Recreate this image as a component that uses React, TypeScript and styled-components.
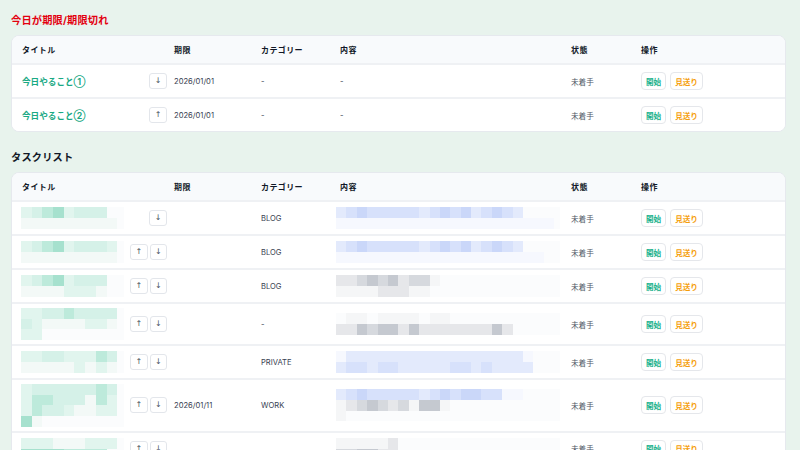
import React from "react";
import styled, { createGlobalStyle } from "styled-components";

const GlobalStyle = createGlobalStyle`
  body {
    margin: 0;
    background: #e8f3ed;
    font-family: Inter, "Noto Sans CJK JP", sans-serif;
    color: #374151;
  }
`;

const Page = styled.div`
  padding: 13px 14px 0 11px;
  display: flex;
  flex-direction: column;
`;

const SectionTitle = styled.h2<{ $color: string }>`
  margin: 0 0 8px;
  font-size: 10.2px;
  line-height: 14px;
  font-weight: 700;
  color: ${(p) => p.$color};
  letter-spacing: 0.2px;
`;

const Card = styled.div`
  background: #fff;
  border: 1px solid #e6e9ee;
  border-radius: 8px;
  overflow: hidden;
  margin-bottom: 18px;
`;

const Row = styled.div<{ $head?: boolean }>`
  display: grid;
  grid-template-columns: 108px 44px 87px 79px 231px 70px 1fr;
  align-items: center;
  padding: ${(p) => (p.$head ? "0" : "4px")} 0 ${(p) => (p.$head ? "0" : "4px")} 10px;
  min-height: ${(p) => (p.$head ? "27px" : "24px")};
  background: ${(p) => (p.$head ? "#f8fafc" : "#fff")};
  border-top: ${(p) => (p.$head ? "none" : "2px solid #eff1f4")};
`;

const HeadCell = styled.div`
  font-size: 8px;
  font-weight: 700;
  color: #111827;
  letter-spacing: 0.4px;
`;

const Cell = styled.div<{ $muted?: boolean }>`
  font-size: 7.6px;
  color: ${(p) => (p.$muted ? "#4b5563" : "#374151")};
`;

const TitleLink = styled.div`
  font-size: 8.6px;
  font-weight: 700;
  color: #1aa984;
`;

const ArrowCell = styled.div`
  display: flex;
  justify-content: flex-end;
  gap: 2px;
  padding-right: 7px;
`;

const ArrowButton = styled.button`
  width: 18px;
  height: 16px;
  padding: 0;
  border: 1px solid #e3e6eb;
  border-radius: 3px;
  background: #fff;
  color: #4b5563;
  font-family: "DejaVu Sans", sans-serif;
  font-size: 8px;
  line-height: 14px;
`;

const Actions = styled.div`
  display: flex;
  gap: 4px;
`;

const ActionButton = styled.button<{ $color: string }>`
  height: 18px;
  padding: 0 4px;
  border: 1px solid #e5e7eb;
  border-radius: 4px;
  background: #fff;
  color: ${(p) => p.$color};
  font-family: "Noto Sans CJK JP", sans-serif;
  font-size: 7.6px;
  font-weight: 700;
`;

const MosaicBox = styled.div<{ $shift: number; $w: number }>`
  margin-left: ${(p) => p.$shift}px;
  width: ${(p) => p.$w}px;
  background: #fbfcfd;
  display: flex;
  flex-direction: column;
`;

const MosaicLine = styled.div`
  display: flex;
  height: 10.7px;
`;

const Tile = styled.span<{ $c: string; $cw: number }>`
  width: ${(p) => p.$cw}px;
  flex: none;
  background: ${(p) => p.$c};
`;

const palettes: Record<string, Record<string, string>> = {
  g: { ".": "transparent", "0": "#f3f9f7", "1": "#e1f5ee", "2": "#d5f1e8", "3": "#bdeadb", "4": "#a6e1ce" },
  b: { ".": "transparent", "0": "#f6f8fe", "1": "#e3eafc", "2": "#d7e1fb", "3": "#cad7f9" },
  k: { ".": "transparent", "0": "#f5f6f7", "1": "#e6e7ea", "2": "#d6d9de", "3": "#c5c9d0" },
};

// each line: palette letter + tiles
function Mosaic({ lines, shift = 0, width, cw = 10.7 }: { lines: string[]; shift?: number; width: number; cw?: number }) {
  return (
    <MosaicBox $shift={shift} $w={width}>
      {lines.map((line, i) => {
        const pal = palettes[line[0]];
        return (
          <MosaicLine key={i}>
            {line
              .slice(1)
              .split("")
              .map((ch, j) => (
                <Tile key={j} $c={pal[ch]} $cw={cw} />
              ))}
          </MosaicLine>
        );
      })}
    </MosaicBox>
  );
}

const Arrows = ({ up, down }: { up?: boolean; down?: boolean }) => (
  <ArrowCell>
    {up && <ArrowButton>↑</ArrowButton>}
    {down && <ArrowButton>↓</ArrowButton>}
  </ArrowCell>
);

const RowActions = () => (
  <Actions>
    <ActionButton $color="#14b08a">開始</ActionButton>
    <ActionButton $color="#f59e0b">見送り</ActionButton>
  </Actions>
);

const Header = () => (
  <Row $head>
    <HeadCell>タイトル</HeadCell>
    <div />
    <HeadCell>期限</HeadCell>
    <HeadCell>カテゴリー</HeadCell>
    <HeadCell>内容</HeadCell>
    <HeadCell>状態</HeadCell>
    <HeadCell>操作</HeadCell>
  </Row>
);

const todayTasks = [
  { title: "今日やること①", up: false, down: true },
  { title: "今日やること②", up: true, down: false },
];

const tasks = [
  {
    title: ["g12341222", "g000000000"],
    up: false,
    down: true,
    due: "",
    cat: "BLOG",
    body: ["b123222221232312321", "b000000000000000000000"],
  },
  {
    title: ["g123412221", "g000000000"],
    up: true,
    down: true,
    due: "",
    cat: "BLOG",
    body: ["b123222221232312321", "b00000000000000000000"],
  },
  {
    title: ["g12341222", "g00001110"],
    up: true,
    down: true,
    due: "",
    cat: "BLOG",
    body: ["k1123231220", "k000011100"],
  },
  {
    title: ["g112232222", "g210000110", "g11"],
    up: true,
    down: true,
    due: "",
    cat: "-",
    body: ["k.00.0000.00", "k11323313111111131"],
  },
  {
    title: ["g112211132", "g000001010"],
    up: true,
    down: true,
    due: "",
    cat: "PRIVATE",
    body: ["b0111111111111111110", "b1221221111122121111"],
  },
  {
    title: ["g122222232", "g133222031", "g132210011", "g40"],
    up: true,
    down: true,
    due: "2026/01/11",
    cat: "WORK",
    body: ["b123222221232332200", "k01232120330", "k0"],
  },
  {
    title: ["g111000111", "g44443333"],
    up: true,
    down: true,
    due: "",
    cat: "",
    body: ["k000001", "k223311"],
  },
];

export default function App() {
  return (
    <>
      <GlobalStyle />
      <Page>
        <SectionTitle $color="#e3000f">今日が期限/期限切れ</SectionTitle>
        <Card>
          <Header />
          {todayTasks.map((t) => (
            <Row key={t.title}>
              <TitleLink>{t.title}</TitleLink>
              <Arrows up={t.up} down={t.down} />
              <Cell>2026/01/01</Cell>
              <Cell>-</Cell>
              <Cell>-</Cell>
              <Cell $muted>未着手</Cell>
              <RowActions />
            </Row>
          ))}
        </Card>

        <SectionTitle $color="#111827">タスクリスト</SectionTitle>
        <Card>
          <Header />
          {tasks.map((t, i) => (
            <Row key={i}>
              <Mosaic lines={t.title} shift={-1} width={103} />
              <Arrows up={t.up} down={t.down} />
              <Cell>{t.due}</Cell>
              <Cell>{t.cat}</Cell>
              <Mosaic lines={t.body} shift={-4} width={224} cw={10.4} />
              <Cell $muted>未着手</Cell>
              <RowActions />
            </Row>
          ))}
        </Card>
      </Page>
    </>
  );
}
